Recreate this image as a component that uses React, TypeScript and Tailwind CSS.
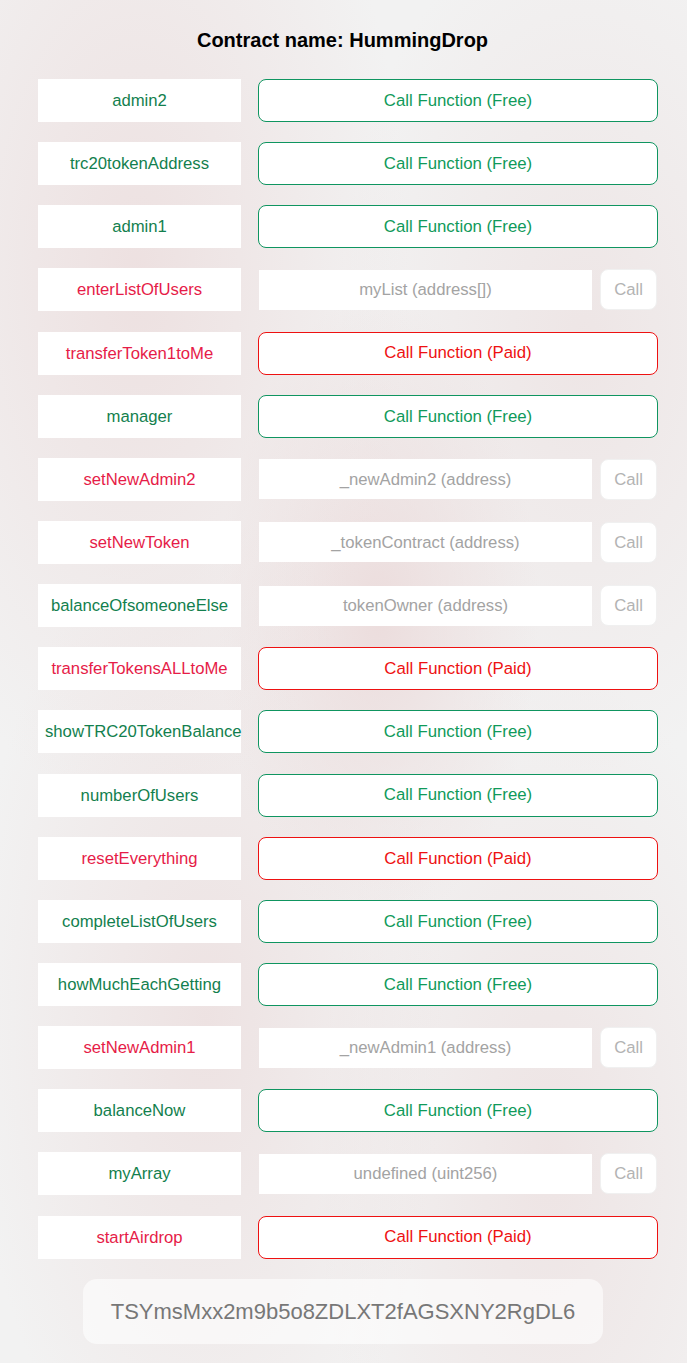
const rows: { name: string; kind: "free" | "paid" | "input"; placeholder?: string; paid?: boolean }[] = [
  { name: "admin2", kind: "free" },
  { name: "trc20tokenAddress", kind: "free" },
  { name: "admin1", kind: "free" },
  { name: "enterListOfUsers", kind: "input", placeholder: "myList (address[])", paid: true },
  { name: "transferToken1toMe", kind: "paid" },
  { name: "manager", kind: "free" },
  { name: "setNewAdmin2", kind: "input", placeholder: "_newAdmin2 (address)", paid: true },
  { name: "setNewToken", kind: "input", placeholder: "_tokenContract (address)", paid: true },
  { name: "balanceOfsomeoneElse", kind: "input", placeholder: "tokenOwner (address)" },
  { name: "transferTokensALLtoMe", kind: "paid" },
  { name: "showTRC20TokenBalance", kind: "free" },
  { name: "numberOfUsers", kind: "free" },
  { name: "resetEverything", kind: "paid" },
  { name: "completeListOfUsers", kind: "free" },
  { name: "howMuchEachGetting", kind: "free" },
  { name: "setNewAdmin1", kind: "input", placeholder: "_newAdmin1 (address)", paid: true },
  { name: "balanceNow", kind: "free" },
  { name: "myArray", kind: "input", placeholder: "undefined (uint256)" },
  { name: "startAirdrop", kind: "paid" },
];

const Row = ({ row }: { row: (typeof rows)[number] }) => {
  const red = row.kind === "paid" || row.paid;
  return (
    <div className="flex items-center h-[43px]">
      <div
        className={`w-[203px] h-[43px] shrink-0 bg-white px-[7px] text-center leading-[43px] text-[16.7px] whitespace-nowrap ${
          red ? "text-[#e61c48]" : "text-[#137f4e]"
        }`}
      >
        {row.name}
      </div>
      {row.kind === "input" ? (
        <div className="ml-[17px] flex items-center w-[400px]">
          <div className="w-[333px] h-[40px] ml-px bg-white flex items-center justify-center text-[16.7px] text-[#a3a3a3]">
            {row.placeholder}
          </div>
          <div className="ml-[8px] w-[57px] h-[41px] bg-white rounded-[8px] border border-[#f0f0f0] flex items-center justify-center text-[16.7px] text-[#b3b3b3]">
            Call
          </div>
        </div>
      ) : (
        <button
          className={`ml-[17px] w-[400px] h-[43px] bg-white rounded-[8px] border text-[16.8px] ${
            row.kind === "paid" ? "border-[#ee1111] text-[#ee1111]" : "border-[#0f9560] text-[#109a5a]"
          }`}
        >
          {row.kind === "paid" ? "Call Function (Paid)" : "Call Function (Free)"}
        </button>
      )}
    </div>
  );
};

export default function App() {
  return (
    <div
      className="min-h-[1363px] w-full bg-[#f2f2f2] bg-[radial-gradient(ellipse_at_20%_20%,rgba(236,220,220,0.8),transparent_35%),radial-gradient(ellipse_at_55%_45%,rgba(235,218,218,0.9),transparent_30%),radial-gradient(ellipse_at_85%_25%,rgba(236,224,224,0.7),transparent_30%),radial-gradient(ellipse_at_30%_75%,rgba(236,222,222,0.8),transparent_35%),radial-gradient(ellipse_at_80%_85%,rgba(236,222,222,0.7),transparent_30%)]"
      style={{ fontFamily: '"Liberation Sans", Arial, sans-serif' }}
    >
      <div className="pt-[28px] flex flex-col">
        <h1 className="text-center text-[20px] font-bold text-black h-[24px] leading-[24px] pr-[2px]">
          Contract name: HummingDrop
        </h1>
        <div className="mt-[27px] ml-[38px] flex flex-col gap-[20.15px]">
          {rows.map((r) => (
            <Row key={r.name} row={r} />
          ))}
        </div>
        <div className="mt-[20px] ml-[83px] w-[520px] h-[65px] rounded-[14px] bg-white/60 flex items-center justify-center text-[22px] text-[#777777]">
          TSYmsMxx2m9b5o8ZDLXT2fAGSXNY2RgDL6
        </div>
      </div>
    </div>
  );
}
